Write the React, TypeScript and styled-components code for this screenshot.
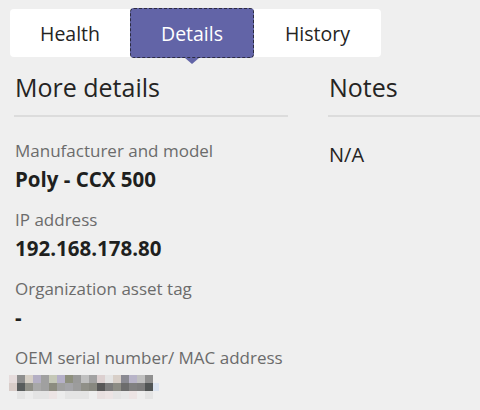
import React from "react";
import styled, { createGlobalStyle } from "styled-components";

const GlobalStyle = createGlobalStyle`
  html, body {
    margin: 0;
    padding: 0;
    background: #efefef;
    overflow: hidden;
  }
  body {
    font-family: "Open Sans", "Noto Sans", sans-serif;
    color: #252423;
  }
`;

const Page = styled.div`
  width: 480px;
  height: 410px;
  padding: 9px 0 0 10px;
  box-sizing: border-box;
  overflow: hidden;
`;

const TabBar = styled.div`
  display: inline-flex;
  align-items: stretch;
  height: 48px;
  background: #ffffff;
  border-radius: 4px;
`;

const Tab = styled.div<{ $active?: boolean; $width?: number }>`
  position: relative;
  display: flex;
  align-items: center;
  justify-content: center;
  box-sizing: border-box;
  width: ${(p) => (p.$width ? `${p.$width}px` : "auto")};
  font-size: 19.5px;
  color: ${(p) => (p.$active ? "#ffffff" : "#252423")};
  background: ${(p) => (p.$active ? "#6264a7" : "transparent")};
  border: ${(p) => (p.$active ? "1px dashed #2b2b40" : "1px solid transparent")};
  border-radius: 4px;
  margin: ${(p) => (p.$active ? "-1px 0" : "0")};
  ${(p) =>
    p.$active &&
    `
    &::after {
      content: "";
      position: absolute;
      left: 50%;
      bottom: -7px;
      transform: translateX(-50%);
      border-left: 7px solid transparent;
      border-right: 7px solid transparent;
      border-top: 6px solid #6264a7;
    }
  `}
`;

const Columns = styled.div`
  display: grid;
  grid-template-columns: 274px 274px;
  column-gap: 40px;
  margin-left: 4px;
  margin-top: 13px;
`;

const Column = styled.section`
  display: flex;
  flex-direction: column;
`;

const Heading = styled.h2`
  margin: 0;
  font-size: 25px;
  font-weight: 400;
  line-height: 34px;
  padding-left: 1px;
  padding-bottom: 11px;
  border-bottom: 2px solid #dcdcdc;
`;

const FieldList = styled.div`
  display: flex;
  flex-direction: column;
  padding-top: 22px;
  padding-left: 1px;
  gap: 13px;
`;

const Field = styled.div`
  display: flex;
  flex-direction: column;
`;

const Label = styled.div`
  font-size: 17px;
  line-height: 24px;
  color: #6b6b6b;
`;

const Value = styled.div`
  font-size: 20.5px;
  line-height: 32px;
  font-weight: 700;
  color: #201f1e;
`;

const NoteText = styled.div`
  padding-top: 25px;
  padding-left: 1px;
  font-size: 20px;
  line-height: 26px;
  color: #252423;
`;

const Blur = styled.svg`
  display: block;
  margin-top: 5px;
  margin-left: -6px;
`;

const rows: string[][] = [
  ["#e6dcdc", "#8e8e8e", "#d6cfc6", "#b4afc4", "#a0a0a0", "#c5c8b8", "#b5b0c8", "#8e907e", "#9a9a9a", "#c0c0c0", "#a2a2a2", "#dcd0d0", "#e4e4e4", "#d8cfc8", "#8a8a92", "#b8b4c8", "#c0c0c0", "#909090"],
  ["#d8ccc8", "#585c5c", "#909088", "#a8a8a8", "#a0a0a0", "#8c8c80", "#a0a0a0", "#a4a4a8", "#9c9c9c", "#909088", "#888880", "#585858", "#7c7c7c", "#8c8c84", "#6c6c6c", "#808080", "#7c7c7c", "#505454", "#dce4f0"],
  ["#efefef", "#e4e4e4", "#ececec", "#e4e4e4", "#e4e4e4", "#ece4e4", "#ececec", "#e4e4e4", "#e4e4e4", "#e4e4e4", "#eeeeee", "#e8e0e0", "#ece4e4", "#e4e4e4", "#e8e8e8", "#ece4e4", "#eeeeee", "#e4e4e4"],
];

const PixelBlur = () => (
  <Blur width="152" height="24" viewBox="0 0 152 24">
    {rows.map((row, r) =>
      row.map((c, i) => (
        <rect key={`${r}-${i}`} x={i * 8} y={r * 8} width={i === 18 ? 6 : 8} height="8" fill={c} />
      ))
    )}
  </Blur>
);

const fields = [
  { label: "Manufacturer and model", value: "Poly - CCX 500" },
  { label: "IP address", value: "192.168.178.80" },
  { label: "Organization asset tag", value: "-" },
];

export default function App() {
  return (
    <>
      <GlobalStyle />
      <Page>
        <TabBar>
          <Tab $width={120}>Health</Tab>
          <Tab $width={124} $active>Details</Tab>
          <Tab $width={127}>History</Tab>
        </TabBar>
        <Columns>
          <Column>
            <Heading>More details</Heading>
            <FieldList>
              {fields.map((f) => (
                <Field key={f.label}>
                  <Label>{f.label}</Label>
                  <Value>{f.value}</Value>
                </Field>
              ))}
              <Field>
                <Label>OEM serial number/ MAC address</Label>
                <PixelBlur />
              </Field>
            </FieldList>
          </Column>
          <Column>
            <Heading>Notes</Heading>
            <NoteText>N/A</NoteText>
          </Column>
        </Columns>
      </Page>
    </>
  );
}
